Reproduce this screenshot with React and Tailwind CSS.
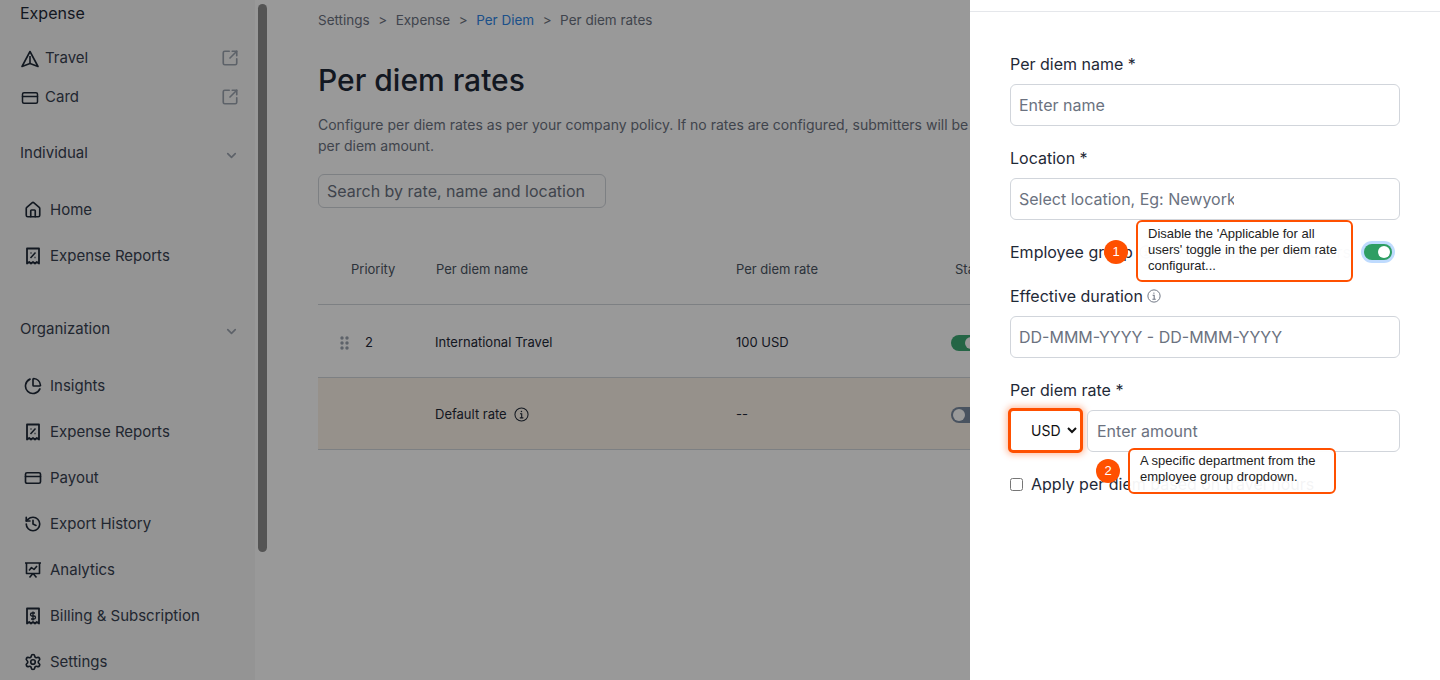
import { ChartPie, ChevronDown, CreditCard, History, House, Settings, SquareArrowOutUpRight } from "lucide-react";

function TravelIcon() {
  return (
    <svg width="18" height="18" viewBox="0 0 18 18" fill="none" stroke="currentColor" strokeWidth="1.6" strokeLinejoin="round">
      <path d="M9 1.5 L1 16.5 L9 13.5 L17 16.5 Z" />
      <path d="M9 6 V13.5" />
    </svg>
  );
}

function InfoIcon({ size = 14, className }) {
  return (
    <svg width={size} height={size} viewBox="0 0 16 16" fill="none" stroke="currentColor" strokeWidth="1.1" className={className}>
      <circle cx="8" cy="8" r="7" />
      <path d="M6.4 7.2 H8.2 V11.6 M6.2 11.6 H10" strokeWidth="1.2" />
      <circle cx="7.9" cy="4.7" r="0.8" fill="currentColor" stroke="none" />
    </svg>
  );
}

function ReceiptIcon({ dollar }) {
  return (
    <svg width="18" height="18" viewBox="0 0 18 18" fill="none" stroke="currentColor" strokeWidth="1.8" strokeLinejoin="round">
      <path d="M3 1.5 H15 V16.5 L12.8 15 L11 16.5 L9 15 L7 16.5 L5.2 15 L3 16.5 Z" />
      {dollar ? (
        <path d="M11 6 H8 A1.4 1.4 0 0 0 8 9 H10 A1.4 1.4 0 0 1 10 12 H7 M9 4.5 V13.5" strokeWidth="1.3" />
      ) : (
        <path d="M6.5 11 L11.5 5.5 M6.5 6 H7.5 M10.5 10.5 H11.5" strokeWidth="1.5" />
      )}
    </svg>
  );
}

function AnalyticsIcon() {
  return (
    <svg width="18" height="18" viewBox="0 0 18 18" fill="none" stroke="currentColor" strokeWidth="1.6" strokeLinejoin="round">
      <path d="M1 2 H17 M2.5 2 V12.5 H15.5 V2 M9 12.5 L5.5 16.5 M9 12.5 L12.5 16.5" />
      <path d="M5 9.5 L7.5 6.5 L10 8.5 L13 5" />
    </svg>
  );
}

function NavRow({ icon, label }) {
  return (
    <div className="flex h-[46px] items-center gap-[8px] pl-[4px] text-[15px] text-[#374151]">
      <span className="flex w-[18px] justify-center text-[#1f2937]">{icon}</span>
      <span>{label}</span>
    </div>
  );
}

function ExternalRow({ icon, label }) {
  return (
    <div className="flex h-[39px] items-center pr-[16px] text-[15px] text-[#374151]">
      <span className="flex w-[19px] justify-center text-[#1f2937]">{icon}</span>
      <span className="ml-[6px] flex-1">{label}</span>
      <SquareArrowOutUpRight size={18} strokeWidth={2.2} className="-mt-[2px] text-[#9ca3af]" />
    </div>
  );
}

function GroupTitle({ label, className }) {
  return (
    <div className={`flex h-[24px] items-center justify-between pr-[16px] text-[15px] text-[#374151] ${className}`}>
      <span>{label}</span>
      <ChevronDown size={15} strokeWidth={2.6} className="mt-[4px] text-[#9ca3af]" />
    </div>
  );
}

function Sidebar() {
  return (
    <aside className="relative w-[255px] shrink-0 bg-[#f7f7f7] pl-[20px]">
      <div className="h-[27px] text-[16px] leading-[27px] text-[#1f2937]">Expense</div>
      <div className="mt-[12px]">
        <ExternalRow icon={<TravelIcon />} label="Travel" />
        <ExternalRow icon={<CreditCard size={18} />} label="Card" />
      </div>
      <GroupTitle label="Individual" className="mt-[24px]" />
      <div className="mt-[22px]">
        <NavRow icon={<House size={18} strokeWidth={2.2} />} label="Home" />
        <NavRow icon={<ReceiptIcon />} label="Expense Reports" />
      </div>
      <GroupTitle label="Organization" className="mt-[38px]" />
      <div className="mt-[22px]">
        <NavRow icon={<ChartPie size={18} strokeWidth={2.2} />} label="Insights" />
        <NavRow icon={<ReceiptIcon />} label="Expense Reports" />
        <NavRow icon={<CreditCard size={18} strokeWidth={2.2} />} label="Payout" />
        <NavRow icon={<History size={18} strokeWidth={2.2} />} label="Export History" />
        <NavRow icon={<AnalyticsIcon />} label="Analytics" />
        <NavRow icon={<ReceiptIcon dollar />} label="Billing & Subscription" />
        <NavRow icon={<Settings size={18} strokeWidth={2.2} />} label="Settings" />
      </div>
      <div className="absolute left-[258px] top-[4px] h-[548px] w-[9px] rounded-full bg-[#8d8d8d]" />
    </aside>
  );
}

function DragDots() {
  return (
    <svg width="9" height="14" viewBox="0 0 9 14" fill="#9ca3af">
      <circle cx="2" cy="2" r="1.7" />
      <circle cx="7" cy="2" r="1.7" />
      <circle cx="2" cy="7" r="1.7" />
      <circle cx="7" cy="7" r="1.7" />
      <circle cx="2" cy="12" r="1.7" />
      <circle cx="7" cy="12" r="1.7" />
    </svg>
  );
}

function MainContent() {
  return (
    <main className="min-w-0 flex-1 pl-[63px] pr-[48px]">
      <nav className="flex h-[41px] items-center gap-[8.5px] text-[13.5px] text-[#6b7280]">
        <span>Settings</span>
        <span>&gt;</span>
        <span>Expense</span>
        <span>&gt;</span>
        <span className="text-[#2f86e6]">Per Diem</span>
        <span>&gt;</span>
        <span>Per diem rates</span>
      </nav>
      <h1 className="mt-[19px] text-[30px] font-medium leading-[40px] text-[#1f2937]">Per diem rates</h1>
      <p className="mt-[14px] text-[14px] leading-[21px] text-[#6b7280]">
        Configure per diem rates as per your company policy. If no rates are configured, submitters will be able to enter any
        <br />
        per diem amount.
      </p>
      <input
        placeholder="Search by rate, name and location"
        className="mt-[18px] block h-[34px] w-[288px] rounded-md border border-[#d1d5db] px-[8px] text-[16px] placeholder:text-[#6b7280]"
      />
      <div className="mt-[27px] grid h-[70px] grid-cols-[118px_300px_219px_1fr] items-center border-b border-[#d1d5db] text-[13px] text-[#4b5563]">
        <span className="pl-[33px]">Priority</span>
        <span>Per diem name</span>
        <span>Per diem rate</span>
        <span>Status</span>
      </div>
      <div className="grid h-[73px] grid-cols-[117px_301px_215px_1fr] items-center border-b border-[#d1d5db] pt-[3px] text-[13px] text-[#1f2937]">
        <span className="flex items-center gap-[16px] pl-[22px]">
          <DragDots />
          <span>2</span>
        </span>
        <span>International Travel</span>
        <span>100 USD</span>
        <span className="flex h-[16px] w-[28px] items-center justify-end rounded-full bg-[#3da874] pr-[2px]">
          <span className="h-[12px] w-[12px] rounded-full bg-white" />
        </span>
      </div>
      <div className="grid h-[72px] grid-cols-[117px_301px_215px_1fr] items-center border-b border-[#d1d5db] bg-[#fbf2e8] pt-[2px] text-[13px] text-[#1f2937]">
        <span />
        <span className="flex items-center gap-[7px]">
          Default rate
          <InfoIcon size={15} />
        </span>
        <span>--</span>
        <span className="flex h-[16px] w-[28px] items-center rounded-full bg-[#7b8aa0] pl-[2px]">
          <span className="h-[12px] w-[12px] rounded-full bg-white" />
        </span>
      </div>
    </main>
  );
}

function Badge({ n, className }) {
  return (
    <span className={`absolute flex h-[24px] w-[24px] items-center justify-center rounded-full bg-[#ff5000] font-['Liberation_Sans',sans-serif] text-[13px] text-white ${className}`}>
      {n}
    </span>
  );
}

function Tip({ children, className }) {
  return (
    <div className={`absolute rounded-[6px] border-2 border-[#ff5000] bg-white/95 font-['Liberation_Sans',sans-serif] text-[13px] leading-[16px] text-[#222] ${className}`}>
      {children}
    </div>
  );
}

const fieldClass = "block h-[42px] w-full rounded-md border border-[#d1d5db] bg-white px-[8px] text-[16px] placeholder:text-[#6b7280]";

function Drawer() {
  return (
    <section className="absolute inset-y-0 right-0 w-[470px] bg-white text-[16px] text-[#1f2937]">
      <div className="h-[12px] border-b border-[#e5e7eb]" />
      <div className="px-[40px] pt-[40px]">
        <label className="block leading-[24px]">Per diem name *</label>
        <input placeholder="Enter name" className={`mt-[8px] ${fieldClass}`} />
        <label className="mt-[20px] block leading-[24px]">Location *</label>
        <div className="mt-[8px] flex h-[42px] items-center rounded-md border border-[#d1d5db] px-[8px]">
          <input placeholder="Select location, Eg: Newyork" className="w-[215px] text-[16px] placeholder:text-[#6b7280]" />
        </div>
        <div className="mt-[20px] flex h-[24px] items-center justify-between">
          <span className="flex items-center gap-[6px]">
            Employee group
            <InfoIcon className="text-[#6b7280]" />
          </span>
          <span className="flex items-center gap-[13px]">
            <span className="text-[#9ca3af]">Applicable for all users</span>
            <span className="mr-[8px] flex h-[16px] w-[28px] items-center justify-end rounded-full bg-[#2f9e63] pr-[2px] shadow-[0_0_0_3px_#bfdbfe]">
              <span className="h-[12px] w-[12px] rounded-full bg-white" />
            </span>
          </span>
        </div>
        <div className="mt-[20px] flex h-[24px] items-center gap-[4px]">
          Effective duration
          <InfoIcon className="text-[#6b7280]" />
        </div>
        <input placeholder="DD-MMM-YYYY - DD-MMM-YYYY" className={`mt-[8px] ${fieldClass}`} />
        <label className="mt-[20px] block leading-[24px]">Per diem rate *</label>
        <div className="mt-[8px] flex h-[42px] items-start gap-[4px]">
          <select
            defaultValue="USD"
            className="-ml-[2px] -mt-[2px] h-[45px] w-[75px] shrink-0 rounded-[5px] border-[3px] border-[#ff5000] bg-white pl-[16px] text-[14px] text-[#111] shadow-[0_0_6px_2px_rgba(255,80,0,0.35)]"
          >
            <option>USD</option>
          </select>
          <input placeholder="Enter amount" className={`flex-1 pl-[9px] ${fieldClass}`} />
        </div>
        <label className="mt-[20px] flex h-[24px] items-center gap-[8px]">
          <input type="checkbox" className="m-0 h-[13px] w-[13px]" />
          Apply per diem based on travel hours
        </label>
      </div>
      <Badge n="1" className="left-[134px] top-[240px]" />
      <Tip className="left-[166px] top-[220px] h-[62px] w-[217px] pl-[10px] pt-[4px]">
        Disable the 'Applicable for all users' toggle in the per diem rate configurat...
      </Tip>
      <Badge n="2" className="left-[126px] top-[459px]" />
      <Tip className="left-[158px] top-[448px] h-[46px] w-[208px] pl-[10px] pt-[3px]">
        A specific department from the employee group dropdown.
      </Tip>
    </section>
  );
}

export default function App() {
  return (
    <div className="relative flex h-[680px] w-[1440px] overflow-hidden bg-white font-['Inter',sans-serif]">
      <Sidebar />
      <MainContent />
      <div className="absolute inset-0 bg-black/40" />
      <Drawer />
    </div>
  );
}
